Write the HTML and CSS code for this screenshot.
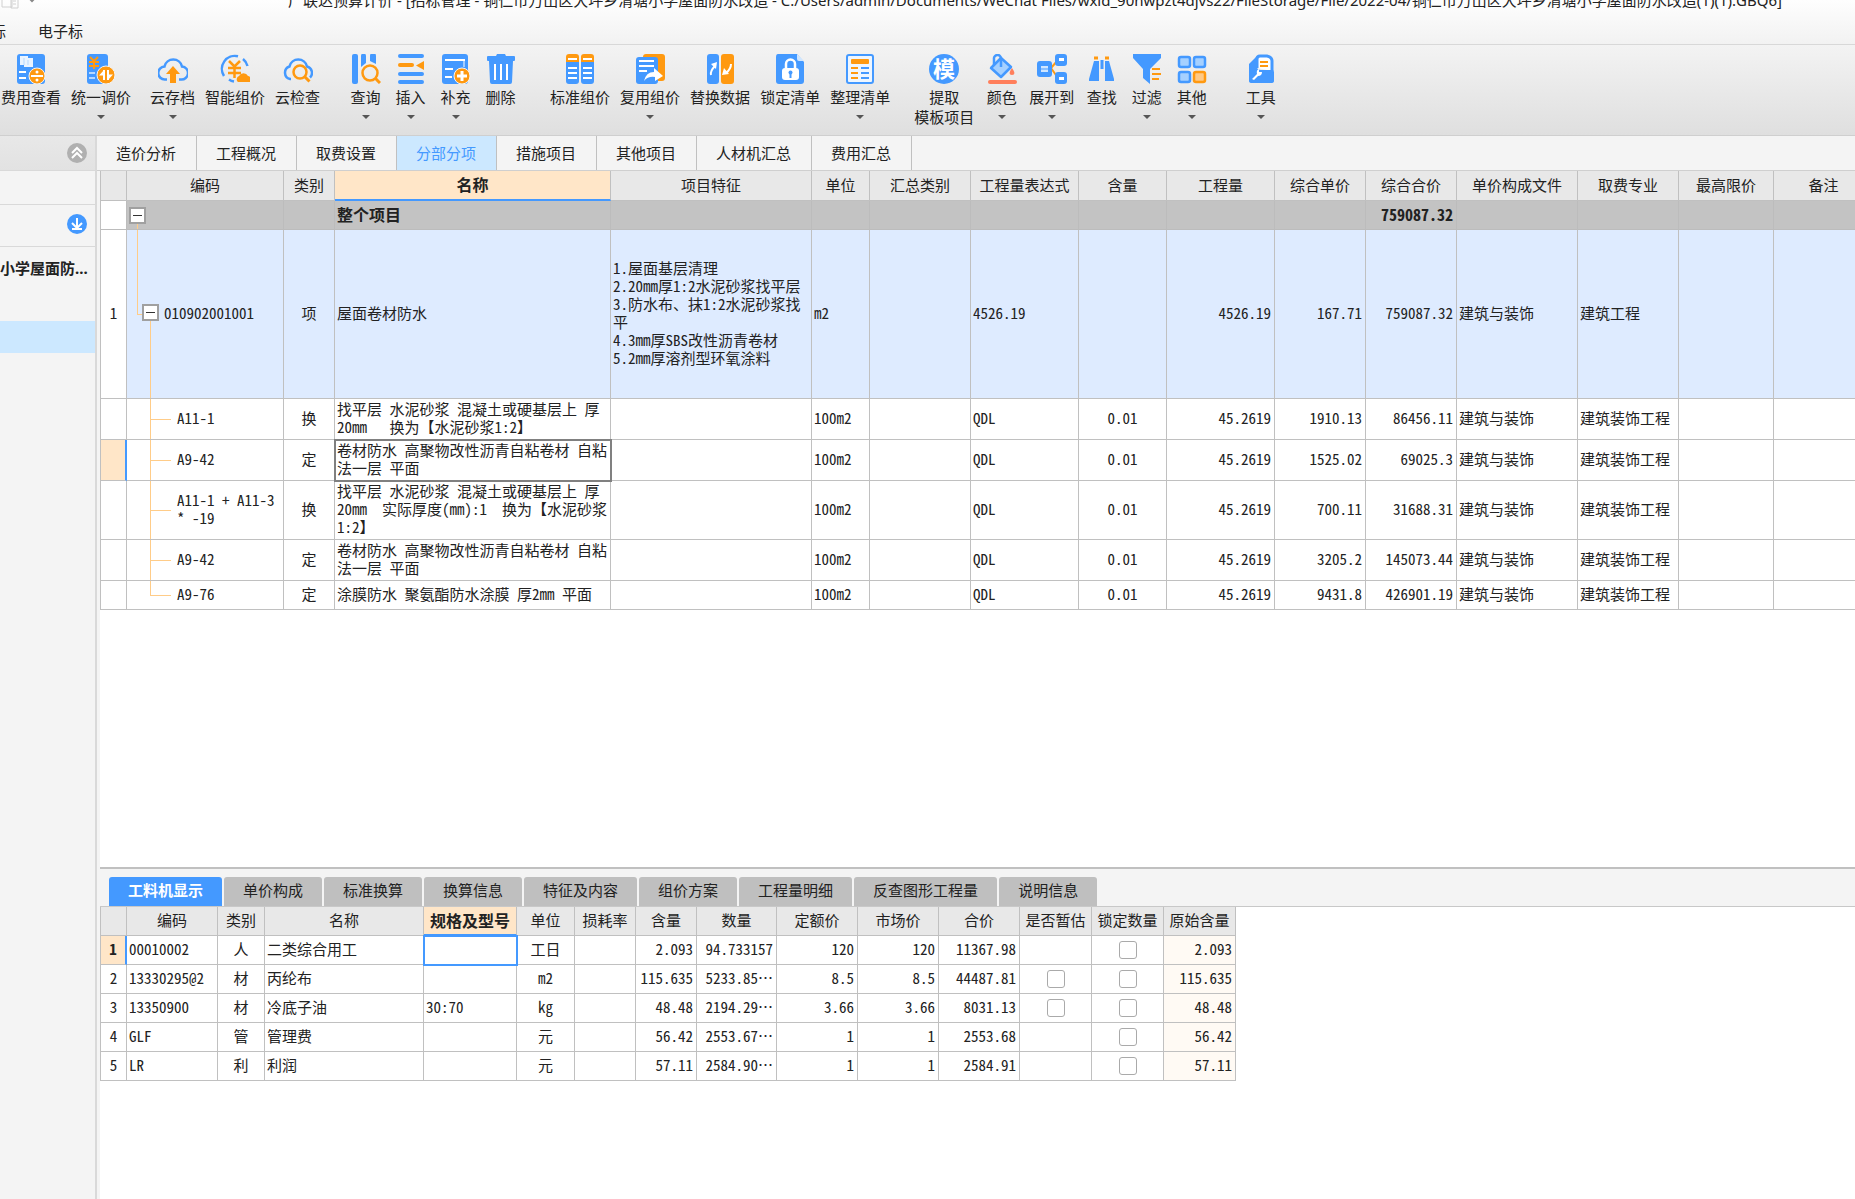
FILE: index.html
```html
<!DOCTYPE html>
<html lang="zh-CN">

<head>
    <meta charset="UTF-8">
    <meta name="viewport" content="width=device-width, initial-scale=1.0">
    <title>广联达预算计价</title>
    <link rel="stylesheet" href="styles.css">
</head>

<body>

    <header class="header">
        <div class="titlebar">
            <div class="quick">
                <svg width="18" height="18" viewBox="0 0 18 18" fill="none" stroke="#d0d0d0"><path d="M1 1h10v15H1zM10 7h7v10h-7zM12 10h3M12 13h3" /></svg>
                <svg width="8" height="8" viewBox="0 0 8 8" fill="none" stroke="#888" stroke-width="2"><path d="M1 2l3 3 3-3" /></svg>
            </div>
            <div class="title">广联达预算计价 - [招标管理 - 铜仁市万山区大坪乡清塘小学屋面防水改造 - C:/Users/admin/Documents/WeChat Files/wxid_90nwpzt4djvs22/FileStorage/File/2022-04/铜仁市万山区大坪乡清塘小学屋面防水改造(1)(1).GBQ6]</div>
        </div>
        <nav class="menu">
            <a href="#">标</a>
            <a href="#">电子标</a>
        </nav>
    </header>

    <div class="toolbar">
        <div class="group">
            <button type="button" class="tool">
                <svg class="icon" viewBox="0 0 30 30">
                    <rect x="1" width="28" height="30" rx="3" fill="#49f" />
                    <path d="M4 2h8v2h5v9H8v-2H4z" fill="#eaf4ff" /><path d="M8 4v7M12 6v5" stroke="#b5d8ff" />
                    <path d="M3 18h7M3 24h7" stroke="#fff" stroke-width="2" />
                    <circle cx="21" cy="22" r="8" fill="#ff9910" stroke="#f4f4f4" />
                    <path d="M15 22h12" stroke="#fff" stroke-width="2" /><circle cx="21" cy="18" r="1.5" fill="#fff" /><circle cx="21" cy="26" r="1.5" fill="#fff" />
                </svg>
                <span>费用查看</span>
            </button>
            <button type="button" class="tool drop">
                <svg class="icon" viewBox="0 0 30 30">
                    <rect x="1" width="21" height="30" rx="3" fill="#49f" />
                    <path d="M4 3l4 4 4-4M8 7v8M3 8h10M3 12h10" stroke="#ff9910" stroke-width="2" fill="none" />
                    <path d="M3 19h6M3 24h6" stroke="#b5d8ff" stroke-width="2" />
                    <circle cx="20" cy="21" r="9" fill="#ff9910" stroke="#f4f4f4" />
                    <path d="M18 16v10M22 16v10" stroke="#fff" stroke-width="2" /><path d="M18 16l-5 5.500h5zM22 26l5-5.500h-5z" fill="#fff" />
                </svg>
                <span>统一调价</span>
            </button>
        </div>

        <div class="group group-cloud">
            <button type="button" class="tool drop">
                <svg class="icon" viewBox="0 0 30 30">
                    <path d="M9 25.500H7A6.500 6.500 0 0 1 6.500 12.500a9 9 0 0 1 17.500 0A6.500 6.500 0 0 1 23 25.500h-2" fill="none" stroke="#49f" stroke-width="2.500" />
                    <path d="M15 12l7 8h-4v9h-6v-9H8z" fill="#ff9910" />
                </svg>
                <span>云存档</span>
            </button>
            <button type="button" class="tool">
                <svg class="icon" viewBox="0 0 30 30">
                    <path d="M14 27.500a13 13 0 0 1-5-2M4 22A13 13 0 0 1 18 2.300M23 5a13 13 0 0 1 4.500 7" fill="none" stroke="#49f" stroke-width="2.500" />
                    <path d="M9 7l5.500 5.500L20 7M14.500 12v12M8 14h13M8 19h13" fill="none" stroke="#ff9910" stroke-width="2.500" />
                    <path d="M18 28a3.500 3.500 0 0 1 1-6 5 5 0 0 1 9 0 3.500 3.500 0 0 1 2 6z" fill="#ff9910" />
                </svg>
                <span>智能组价</span>
            </button>
            <button type="button" class="tool">
                <svg class="icon" viewBox="0 0 30 30">
                    <path d="M8 25H7A6.500 6.500 0 0 1 6.500 12.500a9 9 0 0 1 17.500 0 6.500 6.500 0 0 1 3 11" fill="none" stroke="#49f" stroke-width="2.500" />
                    <circle cx="17" cy="18" r="6.500" fill="none" stroke="#ff9910" stroke-width="2.500" /><path d="M21.500 22.500l5 5" stroke="#ff9910" stroke-width="3" />
                </svg>
                <span>云检查</span>
            </button>
        </div>

        <div class="group group-edit">
            <button type="button" class="tool drop">
                <svg class="icon" viewBox="0 0 30 30">
                    <rect x="1" width="6" height="30" rx="2" fill="#49f" /><path d="M10 2a2 2 0 0 1 5 0v7l-5 4zM19 2a2 2 0 0 1 6 0v8l-6-3z" fill="#49f" />
                    <circle cx="19" cy="19" r="7.500" fill="none" stroke="#ff9910" stroke-width="2.500" /><path d="M24 24l5 5" stroke="#ff9910" stroke-width="3" />
                </svg>
                <span>查询</span>
            </button>
            <button type="button" class="tool drop">
                <svg class="icon" viewBox="0 0 30 30">
                    <path d="M4 2h22M4 20h22M4 28h22" stroke="#49f" stroke-width="4" stroke-linecap="round" />
                    <path d="M4 11h12" stroke="#ff9910" stroke-width="4" stroke-linecap="round" /><path d="M28 7v9l-8-4.500z" fill="#ff9910" />
                </svg>
                <span>插入</span>
            </button>
            <button type="button" class="tool drop">
                <svg class="icon" viewBox="0 0 30 30">
                    <rect x="1" width="26" height="30" rx="3" fill="#49f" />
                    <path d="M4 6h20M4 15h8M4 23h7" stroke="#fff" stroke-width="2" /><path d="M23 6v7" stroke="#fff" />
                    <circle cx="21" cy="22" r="8" fill="#ff9910" stroke="#f4f4f4" /><path d="M16 22h10M21 17v10" stroke="#fff" stroke-width="3" />
                </svg>
                <span>补充</span>
            </button>
            <button type="button" class="tool">
                <svg class="icon" viewBox="0 0 30 30">
                    <path d="M2 2h8l1-2h8l1 2h8q1 0 1 1v3q0 1-1 1h-1l-1 21q0 2-2 2H6q-2 0-2-2L3 7H2Q1 7 1 6V3q0-1 1-1z" fill="#49f" />
                    <path d="M9 10v16M15 10v16M21 10v16" stroke="#fff" stroke-width="2" />
                </svg>
                <span>删除</span>
            </button>
        </div>

        <div class="group group-price">
            <button type="button" class="tool">
                <svg class="icon" viewBox="0 0 30 30">
                    <path d="M1 9V3q0-3 3-3h7q3 0 3 3v6zM16 9V3q0-3 3-3h7q3 0 3 3v6z" fill="#ff9910" /><path d="M1 8h13v19q0 3-3 3H4q-3 0-3-3zM16 8h13v19q0 3-3 3h-7q-3 0-3-3z" fill="#49f" />
                    <path d="M3 5h9M18 5h9M3 14h9M18 14h9M3 19h9M18 19h9M3 24h9M18 24h9" stroke="#fff" stroke-width="2" />
                </svg>
                <span>标准组价</span>
            </button>
            <button type="button" class="tool drop">
                <svg class="icon" viewBox="0 0 30 30">
                    <rect x="8" width="22" height="27" rx="3" fill="#ff9910" /><path d="M4 3h16q3 0 3 3v21q0 3-3 3H4q-3 0-3-3V6q0-3 3-3z" fill="#49f" />
                    <path d="M4 7h15M4 12h15M4 17h8" stroke="#fff" stroke-width="2" /><path d="M19 14l9 8-8 5v-4q-7-1-11 4 2-9 10-9z" fill="#fff" />
                </svg>
                <span>复用组价</span>
            </button>
            <button type="button" class="tool">
                <svg class="icon" viewBox="0 0 30 30">
                    <rect x="2" width="12" height="30" rx="3" fill="#49f" /><rect x="16" width="13" height="30" rx="3" fill="#ff9910" />
                    <path d="M6 21q-1-4 4-9M26 10q0 5-5 9" stroke="#fff" stroke-width="2" fill="none" /><path d="M6 10l6-2-1 7zM19 14l5 6-7 1z" fill="#fff" />
                </svg>
                <span>替换数据</span>
            </button>
            <button type="button" class="tool">
                <svg class="icon" viewBox="0 0 30 30">
                    <path d="M3 0h19l7 8v19q0 3-3 3H4q-3 0-3-3V3q0-3 2-3z" fill="#49f" /><path d="M22 0l7 7h-5q-2 0-2-2z" fill="#cfe6ff" />
                    <rect x="7" y="14" width="17" height="12" rx="3" fill="#fff" /><path d="M11 14v-4a4.500 4.500 0 0 1 9 0v4" stroke="#fff" stroke-width="2.500" fill="none" />
                    <circle cx="15.500" cy="18.500" r="2" fill="#49f" /><path d="M15.500 19v5" stroke="#49f" stroke-width="2" />
                </svg>
                <span>锁定清单</span>
            </button>
            <button type="button" class="tool drop">
                <svg class="icon" viewBox="0 0 30 30">
                    <rect x="2" y="1" width="26" height="28" rx="2" fill="#eef6ff" stroke="#49f" stroke-width="2" /><rect x="6" y="5" width="18" height="5" rx="1" fill="#ff9910" />
                    <path d="M6 14h7M6 19h7M6 24h7" stroke="#ff9910" stroke-width="2" /><path d="M16 14h8M16 19h8M16 24h8" stroke="#49f" stroke-width="2" />
                </svg>
                <span>整理清单</span>
            </button>
        </div>

        <div class="group group-view">
            <button type="button" class="tool">
                <svg class="icon" viewBox="0 0 30 30">
                    <circle cx="15" cy="15" r="15" fill="#49f" /><text x="15" y="23" text-anchor="middle" class="icon-text">模</text>
                </svg>
                <span>提取<br>模板项目</span>
            </button>
            <button type="button" class="tool drop">
                <svg class="icon" viewBox="0 0 30 30">
                    <path d="M14 4l10 9-10 10L4 14z" fill="#a5d0ff" stroke="#49f" stroke-width="2.500" stroke-linejoin="round" /><path d="M7 11V5a3 3 0 0 1 7-1v9" fill="none" stroke="#49f" stroke-width="2.500" />
                    <path d="M25 14q5 7 0 7t0-7z" fill="#ff7f5c" /><path d="M3 28h25" stroke="#ff7f5c" stroke-width="4" stroke-linecap="round" />
                </svg>
                <span>颜色</span>
            </button>
            <button type="button" class="tool drop">
                <svg class="icon" viewBox="0 0 30 30">
                    <path d="M14 14l7-8M14 14l7 10" stroke="#ff9910" stroke-width="2" fill="none" /><rect y="7" width="15" height="16" rx="3" fill="#49f" />
                    <rect x="18" width="12" height="12" rx="3" fill="#49f" /><rect x="18" y="18" width="12" height="12" rx="3" fill="#49f" />
                    <rect x="4" y="12" width="7" height="6" fill="#cfe6ff" /><path d="M4 15h7" stroke="#49f" /><path d="M22 4h5v3h-5zM22 23h5v3h-5z" fill="#fff" />
                </svg>
                <span>展开到</span>
            </button>
            <button type="button" class="tool">
                <svg class="icon" viewBox="0 0 30 30">
                    <path d="M7 4h4M18 4h4" stroke="#ff9910" stroke-width="3" /><path d="M7 7h5v20H2v-2zM18 7h4l5 18v2h-9z" fill="#49f" /><path d="M15 6v9" stroke="#49f" stroke-width="3" />
                </svg>
                <span>查找</span>
            </button>
            <button type="button" class="tool drop">
                <svg class="icon" viewBox="0 0 30 30">
                    <path d="M1 0h28v4L18 15v15l-7-6v-9L1 4z" fill="#49f" /><path d="M20 15h8M20 20h9M20 25h7" stroke="#ff9910" stroke-width="2" />
                </svg>
                <span>过滤</span>
            </button>
            <button type="button" class="tool drop">
                <svg class="icon" viewBox="0 0 30 30" fill="#a5d0ff" stroke="#49f" stroke-width="2.500">
                    <rect x="2" y="3" width="11" height="10" rx="2" /><rect x="17" y="3" width="11" height="10" rx="2" /><rect x="2" y="18" width="11" height="10" rx="2" />
                    <rect x="17" y="18" width="11" height="10" rx="2" fill="#ffc985" stroke="#ff9910" />
                </svg>
                <span>其他</span>
            </button>
        </div>

        <div class="group group-last">
            <button type="button" class="tool drop">
                <svg class="icon" viewBox="0 0 30 30">
                    <path d="M11 14V5q0-3 3-3h7q5 1 5 5v10" fill="#fff" stroke="#49f" stroke-width="3" />
                    <path d="M3 10l8-8v11q0 3 4 3h11q2 0 2 2v9q0 2-3 2H6q-3 0-3-2z" fill="#49f" />
                    <path d="M14 8h8M14 12h8" stroke="#ff9910" stroke-width="2" /><path d="M6 25l5-5q-1-4 2-5v3h3q0 4-4 4l-4 4z" fill="#fff" />
                </svg>
                <span>工具</span>
            </button>
        </div>
    </div>

    <div class="workspace">

        <aside class="sidebar">
            <div class="side-head">
                <button type="button" class="round" aria-label="收起">
                    <svg width="20" height="20" viewBox="0 0 20 20"><circle cx="10" cy="10" r="10" fill="#b0b0b0" /><path d="M5 10l5-5 5 5M5 15l5-5 5 5" fill="none" stroke="#fff" stroke-width="2" /></svg>
                </button>
            </div>
            <div class="side-row"></div>
            <div class="side-row side-tool">
                <button type="button" class="round" aria-label="导入">
                    <svg width="20" height="20" viewBox="0 0 20 20"><circle cx="10" cy="10" r="10" fill="#49f" /><path d="M10 4v9M5 9l5 5 5-5M5 15h10" fill="none" stroke="#fff" stroke-width="2" /></svg>
                </button>
            </div>
            <div class="side-project">小学屋面防...</div>
            <div class="side-selected"></div>
        </aside>

        <main class="main">
            <nav class="tabs">
                <a href="#">造价分析</a>
                <a href="#">工程概况</a>
                <a href="#">取费设置</a>
                <a href="#" class="active">分部分项</a>
                <a href="#">措施项目</a>
                <a href="#">其他项目</a>
                <a href="#">人材机汇总</a>
                <a href="#">费用汇总</a>
            </nav>

            <div class="pane">
                <table class="grid bill">
                    <colgroup>
                        <col class="c-no"><col class="c-code"><col class="c-type"><col class="c-name"><col class="c-feature"><col class="c-unit"><col class="c-sum"><col class="c-expr">
                        <col class="c-rate"><col class="c-qty"><col class="c-price"><col class="c-price"><col class="c-file"><col class="c-major"><col class="c-limit"><col class="c-note">
                    </colgroup>
                    <thead>
                        <tr>
                            <th></th>
                            <th>编码</th>
                            <th>类别</th>
                            <th class="current">名称</th>
                            <th>项目特征</th>
                            <th>单位</th>
                            <th>汇总类别</th>
                            <th>工程量表达式</th>
                            <th>含量</th>
                            <th>工程量</th>
                            <th>综合单价</th>
                            <th>综合合价</th>
                            <th>单价构成文件</th>
                            <th>取费专业</th>
                            <th>最高限价</th>
                            <th>备注</th>
                        </tr>
                    </thead>
                    <tbody>
                        <tr class="total">
                            <td class="no"></td>
                            <td class="root"><button type="button" class="toggle" aria-label="折叠"></button></td>
                            <td></td>
                            <td>整个项目</td>
                            <td></td><td></td><td></td><td></td><td></td><td></td><td></td>
                            <td class="num">759087.32</td>
                            <td></td><td></td><td></td><td></td>
                        </tr>
                        <tr class="item">
                            <td class="no">1</td>
                            <td class="parent"><div class="node"><button type="button" class="toggle" aria-label="折叠"></button>010902001001</div></td>
                            <td class="mid">项</td>
                            <td>屋面卷材防水</td>
                            <td>1.屋面基层清理<br>2.20mm厚1:2水泥砂浆找平层<br>3.防水布、抹1:2水泥砂浆找平<br>4.3mm厚SBS改性沥青卷材<br>5.2mm厚溶剂型环氧涂料</td>
                            <td>m2</td>
                            <td></td>
                            <td>4526.19</td>
                            <td></td>
                            <td class="num">4526.19</td>
                            <td class="num">167.71</td>
                            <td class="num">759087.32</td>
                            <td>建筑与装饰</td>
                            <td>建筑工程</td>
                            <td></td><td></td>
                        </tr>
                        <tr class="two">
                            <td class="no"></td>
                            <td class="child">A11-1</td>
                            <td class="mid">换</td>
                            <td>找平层 水泥砂浆 混凝土或硬基层上 厚<br>20mm&nbsp;&nbsp; 换为【水泥砂浆1:2】</td>
                            <td></td>
                            <td>100m2</td>
                            <td></td>
                            <td>QDL</td>
                            <td class="mid">0.01</td>
                            <td class="num">45.2619</td>
                            <td class="num">1910.13</td>
                            <td class="num">86456.11</td>
                            <td>建筑与装饰</td>
                            <td>建筑装饰工程</td>
                            <td></td><td></td>
                        </tr>
                        <tr class="two">
                            <td class="no here"></td>
                            <td class="child">A9-42</td>
                            <td class="mid">定</td>
                            <td class="focus">卷材防水 高聚物改性沥青自粘卷材 自粘<br>法一层 平面</td>
                            <td></td>
                            <td>100m2</td>
                            <td></td>
                            <td>QDL</td>
                            <td class="mid">0.01</td>
                            <td class="num">45.2619</td>
                            <td class="num">1525.02</td>
                            <td class="num">69025.3</td>
                            <td>建筑与装饰</td>
                            <td>建筑装饰工程</td>
                            <td></td><td></td>
                        </tr>
                        <tr class="three">
                            <td class="no"></td>
                            <td class="child">A11-1 + A11-3 * -19</td>
                            <td class="mid">换</td>
                            <td>找平层 水泥砂浆 混凝土或硬基层上 厚<br>20mm&nbsp; 实际厚度(mm):1&nbsp; 换为【水泥砂浆<br>1:2】</td>
                            <td></td>
                            <td>100m2</td>
                            <td></td>
                            <td>QDL</td>
                            <td class="mid">0.01</td>
                            <td class="num">45.2619</td>
                            <td class="num">700.11</td>
                            <td class="num">31688.31</td>
                            <td>建筑与装饰</td>
                            <td>建筑装饰工程</td>
                            <td></td><td></td>
                        </tr>
                        <tr class="two">
                            <td class="no"></td>
                            <td class="child">A9-42</td>
                            <td class="mid">定</td>
                            <td>卷材防水 高聚物改性沥青自粘卷材 自粘<br>法一层 平面</td>
                            <td></td>
                            <td>100m2</td>
                            <td></td>
                            <td>QDL</td>
                            <td class="mid">0.01</td>
                            <td class="num">45.2619</td>
                            <td class="num">3205.2</td>
                            <td class="num">145073.44</td>
                            <td>建筑与装饰</td>
                            <td>建筑装饰工程</td>
                            <td></td><td></td>
                        </tr>
                        <tr>
                            <td class="no"></td>
                            <td class="child last">A9-76</td>
                            <td class="mid">定</td>
                            <td>涂膜防水 聚氨酯防水涂膜 厚2mm 平面</td>
                            <td></td>
                            <td>100m2</td>
                            <td></td>
                            <td>QDL</td>
                            <td class="mid">0.01</td>
                            <td class="num">45.2619</td>
                            <td class="num">9431.8</td>
                            <td class="num">426901.19</td>
                            <td>建筑与装饰</td>
                            <td>建筑装饰工程</td>
                            <td></td><td></td>
                        </tr>
                    </tbody>
                </table>
            </div>

            <section class="detail">
                <nav class="subtabs">
                    <a href="#" class="active">工料机显示</a>
                    <a href="#">单价构成</a>
                    <a href="#">标准换算</a>
                    <a href="#">换算信息</a>
                    <a href="#">特征及内容</a>
                    <a href="#">组价方案</a>
                    <a href="#">工程量明细</a>
                    <a href="#">反查图形工程量</a>
                    <a href="#">说明信息</a>
                </nav>
                <div class="pane">
                    <table class="grid labor">
                        <colgroup>
                            <col class="d-no"><col class="d-code"><col class="d-type"><col class="d-name"><col class="d-spec"><col class="d-unit"><col class="d-loss"><col class="d-rate">
                            <col class="d-qty"><col class="d-price"><col class="d-price"><col class="d-price"><col class="d-check"><col class="d-check"><col class="d-check">
                        </colgroup>
                        <thead>
                            <tr>
                                <th></th>
                                <th>编码</th>
                                <th>类别</th>
                                <th>名称</th>
                                <th class="current">规格及型号</th>
                                <th>单位</th>
                                <th>损耗率</th>
                                <th>含量</th>
                                <th>数量</th>
                                <th>定额价</th>
                                <th>市场价</th>
                                <th>合价</th>
                                <th>是否暂估</th>
                                <th>锁定数量</th>
                                <th>原始含量</th>
                            </tr>
                        </thead>
                        <tbody>
                            <tr>
                                <td class="no here">1</td>
                                <td>00010002</td>
                                <td class="mid">人</td>
                                <td>二类综合用工</td>
                                <td class="edit"></td>
                                <td class="mid">工日</td>
                                <td></td>
                                <td class="num">2.093</td>
                                <td class="num">94.733157</td>
                                <td class="num">120</td>
                                <td class="num">120</td>
                                <td class="num">11367.98</td>
                                <td></td>
                                <td class="check"><input type="checkbox" aria-label="锁定数量"></td>
                                <td class="num origin">2.093</td>
                            </tr>
                            <tr>
                                <td class="no">2</td>
                                <td>13330295@2</td>
                                <td class="mid">材</td>
                                <td>丙纶布</td>
                                <td></td>
                                <td class="mid">m2</td>
                                <td></td>
                                <td class="num">115.635</td>
                                <td class="num">5233.85…</td>
                                <td class="num">8.5</td>
                                <td class="num">8.5</td>
                                <td class="num">44487.81</td>
                                <td class="check"><input type="checkbox" aria-label="是否暂估"></td>
                                <td class="check"><input type="checkbox" aria-label="锁定数量"></td>
                                <td class="num origin">115.635</td>
                            </tr>
                            <tr>
                                <td class="no">3</td>
                                <td>13350900</td>
                                <td class="mid">材</td>
                                <td>冷底子油</td>
                                <td>30:70</td>
                                <td class="mid">kg</td>
                                <td></td>
                                <td class="num">48.48</td>
                                <td class="num">2194.29…</td>
                                <td class="num">3.66</td>
                                <td class="num">3.66</td>
                                <td class="num">8031.13</td>
                                <td class="check"><input type="checkbox" aria-label="是否暂估"></td>
                                <td class="check"><input type="checkbox" aria-label="锁定数量"></td>
                                <td class="num origin">48.48</td>
                            </tr>
                            <tr>
                                <td class="no">4</td>
                                <td>GLF</td>
                                <td class="mid">管</td>
                                <td>管理费</td>
                                <td></td>
                                <td class="mid">元</td>
                                <td></td>
                                <td class="num">56.42</td>
                                <td class="num">2553.67…</td>
                                <td class="num">1</td>
                                <td class="num">1</td>
                                <td class="num">2553.68</td>
                                <td></td>
                                <td class="check"><input type="checkbox" aria-label="锁定数量"></td>
                                <td class="num origin">56.42</td>
                            </tr>
                            <tr>
                                <td class="no">5</td>
                                <td>LR</td>
                                <td class="mid">利</td>
                                <td>利润</td>
                                <td></td>
                                <td class="mid">元</td>
                                <td></td>
                                <td class="num">57.11</td>
                                <td class="num">2584.90…</td>
                                <td class="num">1</td>
                                <td class="num">1</td>
                                <td class="num">2584.91</td>
                                <td></td>
                                <td class="check"><input type="checkbox" aria-label="锁定数量"></td>
                                <td class="num origin">57.11</td>
                            </tr>
                        </tbody>
                    </table>
                </div>
            </section>
        </main>
    </div>

</body>

</html>
```
FILE: styles.css
```css
* {
    box-sizing: border-box;
}

body {
    margin: 0;
    height: 100vh;
    display: flex;
    flex-direction: column;
    overflow: hidden;
    background: #f4f4f4;
    color: #222;
    font-family: "Noto Sans", "Noto Sans CJK SC", sans-serif;
    font-size: 15px;
    line-height: 20px;
}

a {
    color: inherit;
    text-decoration: none;
    white-space: nowrap;
}

button {
    font: inherit;
    color: inherit;
    border: none;
    background: none;
    padding: 0;
    cursor: pointer;
}

/* title bar and menu */

.header {
    height: 45px;
    overflow: hidden;
    background: linear-gradient(#fefefe, #f2f2f2);
    border-bottom: 1px solid #d8d8d8;
}

.titlebar {
    display: flex;
    margin-top: -10px;
    height: 31px;
}

.quick {
    display: flex;
    gap: 9px;
    width: 288px;
    flex: none;
    align-items: center;
    height: 20px;
    padding-left: 1px;
}

.title {
    white-space: nowrap;
}

.menu {
    display: flex;
    gap: 32px;
    margin-left: -9px;
}

/* toolbar */

.toolbar {
    display: flex;
    height: 91px;
    flex: none;
    padding-top: 9px;
    margin-left: -4px;
    background: linear-gradient(#f3f3f3, #dfdfdf);
    border-bottom: 1px solid #cfcfcf;
}

.group {
    display: flex;
    align-items: flex-start;
}

.group-cloud {
    margin-left: 9px;
}

.group-edit {
    margin-left: 18px;
}

.group-price {
    margin-left: 22px;
}

.group-view {
    margin-left: 14px;
}

.group-last {
    margin-left: 24px;
}

.tool {
    display: flex;
    flex-direction: column;
    align-items: center;
    min-width: 45px;
    padding: 0 5px;
    white-space: nowrap;
}

.tool span {
    margin-top: 3px;
}

.drop::after {
    content: "";
    margin-top: 8px;
    border: 4px solid transparent;
    border-top-color: #555;
    border-bottom: none;
}

.icon {
    width: 30px;
    height: 30px;
}

.icon-text {
    font-size: 22px;
    font-weight: bold;
    fill: #fff;
}

/* left side */

.workspace {
    flex: 1;
    display: flex;
    min-height: 0;
}

.sidebar {
    width: 97px;
    flex: none;
    border-right: 2px solid #d9d9d9;
}

.side-head,
.side-row {
    display: flex;
    align-items: center;
    justify-content: flex-end;
    height: 34px;
    padding-right: 8px;
    border-bottom: 1px solid #d9d9d9;
}

.side-head {
    height: 35px;
    background: linear-gradient(#e8e8e8, #e2e2e2);
}

.side-tool {
    height: 42px;
    padding-bottom: 3px;
}

.round {
    height: 20px;
    width: 20px;
}

.round svg {
    display: block;
}

.side-project {
    height: 42px;
    line-height: 42px;
    white-space: nowrap;
    text-align: right;
    padding-right: 8px;
    font-weight: bold;
}

.side-selected {
    height: 32px;
    margin-top: 32px;
    background: #cce8ff;
}

/* main part */

.main {
    flex: 1;
    min-width: 0;
    display: flex;
    flex-direction: column;
}

.tabs {
    display: flex;
    height: 35px;
    flex: none;
    line-height: 35px;
    border-bottom: 1px solid #cfcfcf;
}

.tabs a {
    padding: 0 20px 0 19px;
    border-right: 1px solid #c0c0c0;
}

.tabs .active {
    background: #cce8ff;
    color: #49f;
}

.pane {
    flex: 1;
    min-height: 0;
    margin-left: 3px;
    overflow: hidden;
    background: #fff;
}

.detail {
    flex: 0 0 332px;
    display: flex;
    flex-direction: column;
}

.subtabs {
    display: flex;
    gap: 2px;
    margin-left: 3px;
    padding: 8px 0 0 9px;
    height: 40px;
    line-height: 27px;
    border-top: 2px solid #c0c0c0;
    border-bottom: 1px solid #c8c8c8;
}

.subtabs a {
    height: 29px;
    padding: 0 19px;
    border-radius: 3px 3px 0 0;
    background: #bfbfbf;
}

.subtabs .active {
    background: #49f;
    color: #fff;
    font-weight: bold;
}

/* tables */

.grid {
    table-layout: fixed;
    border-collapse: separate;
    border-spacing: 0;
    border-left: 1px solid #c0c0c0;
    font-family: "Noto Sans CJK SC", sans-serif;
    font-feature-settings: "hwid";
    font-size: 15px;
    line-height: 18px;
}

.bill {
    width: 1774px;
}

.labor {
    width: 1135px;
}

.grid th,
.grid td {
    height: 29px;
    padding: 0 3px 3px 2px;
    border-right: 1px solid #c0c0c0;
    border-bottom: 1px solid #c0c0c0;
    text-align: left;
    vertical-align: middle;
}

.grid th {
    padding: 0 0 2px;
    background: #e8e8e8;
    text-align: center;
    font-weight: normal;
    white-space: nowrap;
}

.bill th {
    height: 30px;
}

.grid .current {
    background: #ffe6c8;
    border-bottom: 2px solid #49f;
    font-weight: bold;
    font-size: 16px;
}

.grid .mid,
.grid .no {
    text-align: center;
    padding: 0 0 3px;
}

.grid .check {
    padding: 0;
}

.grid .num {
    text-align: right;
}

.grid .here {
    background: #ffe6c8;
    border-right: 2px solid #49f;
    font-weight: bold;
}

.grid .total td {
    background-color: #c3c3c3;
    font-weight: bold;
    font-size: 16px;
    border-color: #bcbcbc;
}

.grid .total .no {
    background-color: #fff;
}

.grid .item td {
    height: 169px;
    background-color: #deebff;
}

.grid .item .no {
    background-color: #fff;
}

.grid .two td {
    height: 41px;
}

.grid .three td {
    height: 59px;
}

.grid .focus {
    outline: 2px solid #808080;
    outline-offset: -1px;
}

.grid .edit {
    outline: 2px solid #49f;
    outline-offset: -1px;
}

.grid .origin {
    background: #fffaf4;
}

/* tree lines in the code column */

.grid .root {
    padding-bottom: 0;
    background-image: linear-gradient(#fc8, #fc8);
    background-size: 1px 50%;
    background-position: 10px 100%;
    background-repeat: no-repeat;
}

.grid .parent {
    background-image: linear-gradient(#fc8, #fc8), linear-gradient(#fc8, #fc8), linear-gradient(#fc8, #fc8);
    background-size: 1px 50%, 6px 1px, 1px 50%;
    background-position: 10px 0, 10px 50%, 23px 100%;
    background-repeat: no-repeat;
    padding-left: 15px;
}

.grid .child {
    background-image: linear-gradient(#fc8, #fc8), linear-gradient(#fc8, #fc8);
    background-size: 1px 100%, 21px 1px;
    background-position: 23px 0, 23px 50%;
    background-repeat: no-repeat;
    padding-left: 50px;
}

.grid .last {
    background-size: 1px 50%, 21px 1px;
}

.node {
    display: flex;
    align-items: center;
    gap: 5px;
}

.toggle {
    display: block;
    width: 17px;
    height: 17px;
    border: 2px solid #a0a0a0;
    background: linear-gradient(#333, #333) center / 9px 1px no-repeat #fff;
}

input[type="checkbox"] {
    appearance: none;
    display: block;
    width: 18px;
    height: 18px;
    margin: 0 auto;
    border: 1px solid #aaa;
    border-radius: 3px;
    background: #fff;
}

col.c-no, col.d-no { width: 26px; }
col.c-code { width: 157px; }
col.c-type { width: 51px; }
col.c-name { width: 276px; }
col.c-feature { width: 201px; }
col.c-unit { width: 58px; }
col.c-sum { width: 101px; }
col.c-expr { width: 108px; }
col.c-rate { width: 88px; }
col.c-qty { width: 108px; }
col.c-price { width: 91px; }
col.c-file { width: 121px; }
col.c-major { width: 101px; }
col.c-limit { width: 95px; }
col.c-note { width: 100px; }

col.d-code { width: 91px; }
col.d-type { width: 47px; }
col.d-name { width: 159px; }
col.d-spec { width: 93px; }
col.d-unit { width: 58px; }
col.d-loss { width: 61px; }
col.d-rate { width: 61px; }
col.d-qty { width: 80px; }
col.d-price { width: 81px; }
col.d-check { width: 72px; }
```
